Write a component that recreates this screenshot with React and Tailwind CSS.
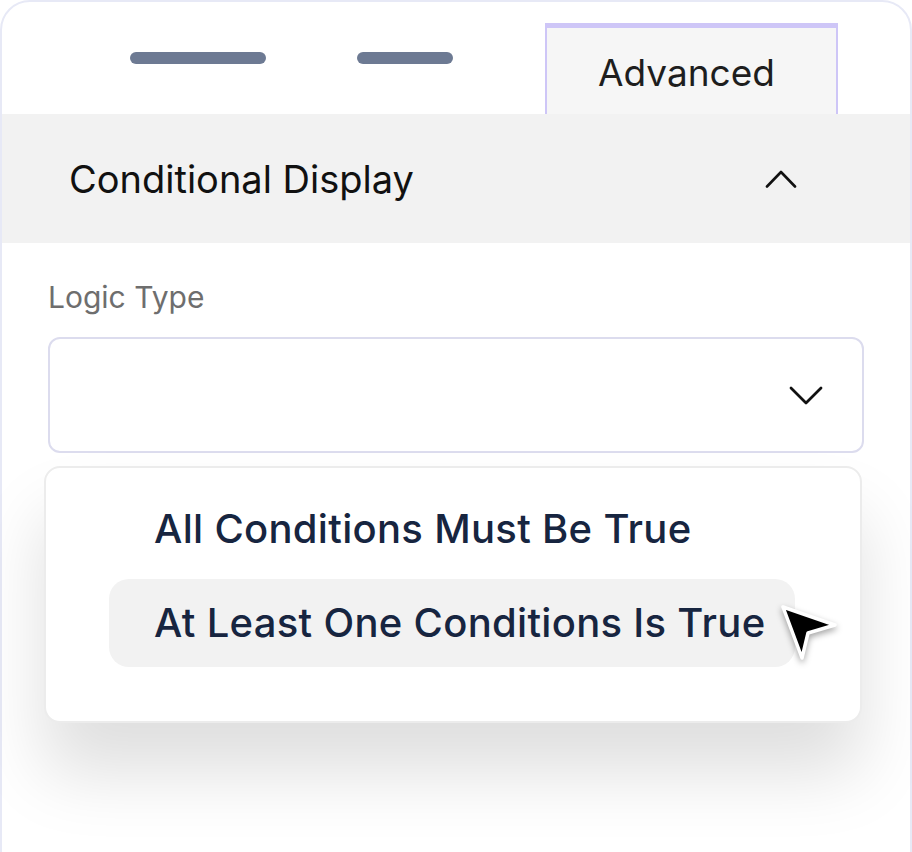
import React from "react";

const options = [
  { label: "All Conditions Must Be True", active: false },
  { label: "At Least One Conditions Is True", active: true },
];

function ChevronUp() {
  return (
    <svg width="32" height="18" viewBox="0 0 32 18" fill="none">
      <path d="M2 16.5 L16 2 L30 16.5" stroke="#111" strokeWidth="2.6" strokeLinecap="round" strokeLinejoin="round" />
    </svg>
  );
}

function ChevronDown() {
  return (
    <svg width="36" height="20" viewBox="0 0 36 20" fill="none">
      <path d="M3 3 L18 18 L33 3" stroke="#111" strokeWidth="2.8" strokeLinecap="round" strokeLinejoin="round" />
    </svg>
  );
}

function Cursor() {
  return (
    <svg width="64" height="64" viewBox="0 0 64 64" className="drop-shadow-[0_3px_3px_rgba(0,0,0,0.35)]">
      <path d="M6 7 L58 25 L31 33 L25 58 Z" fill="#000" stroke="#fff" strokeWidth="3.5" strokeLinejoin="round" />
    </svg>
  );
}

export default function App() {
  return (
    <div className="w-[912px] h-[852px] overflow-hidden bg-white" style={{ fontFamily: "Inter, 'Noto Sans', sans-serif" }}>
      <div className="h-[900px] border-2 border-[#e7e9f6] rounded-t-[30px] bg-white">
        {/* tabs */}
        <div className="flex items-start h-[112px]">
          <div className="ml-[128px] mt-[50px] w-[136px] h-[12px] rounded-full bg-[#6d7a93]" />
          <div className="ml-[91px] mt-[50px] w-[96px] h-[12px] rounded-full bg-[#6d7a93]" />
          <div className="ml-[92px] mt-[21px] w-[293px] h-[91px] border-x-2 border-t-[5px] border-[#cec6f7] bg-[#f6f6f6] text-center pt-[23px] pr-[10px]">
            <span className="text-[37px] leading-[44px] text-[#1e1e1e]">Advanced</span>
          </div>
        </div>

        {/* section header */}
        <div className="h-[129px] bg-[#f2f2f2] flex items-center justify-between pl-[67px] pr-[113px]">
          <span className="text-[38px] leading-[44px] text-[#111]">Conditional Display</span>
          <ChevronUp />
        </div>

        <div className="px-[46px] pt-[36px]">
          <div className="text-[30px] leading-[36px] text-[#6e6e6e]">Logic Type</div>

          <div className="mt-[22px] h-[116px] border-2 border-[#dcdcee] rounded-[12px] flex items-center justify-end pr-[38px]">
            <ChevronDown />
          </div>

          <div className="relative -ml-[4px] mr-[2px] mt-[13px] h-[257px] border-2 border-[#ececec] rounded-[16px] bg-white shadow-[0_50px_70px_rgba(0,0,0,0.13)] pt-[17px] flex flex-col gap-[6px]">
            {options.map((o) => (
              <div
                key={o.label}
                className={
                  "ml-[63px] w-[686px] h-[88px] rounded-[20px] flex items-center pl-[45px] " +
                  (o.active ? "bg-[#f2f2f2]" : "")
                }
              >
                <span className="text-[40px] leading-[48px] font-medium tracking-[0.3px] text-[#172540]">{o.label}</span>
              </div>
            ))}
            <div className="absolute left-[731px] top-[132px]">
              <Cursor />
            </div>
          </div>
        </div>
      </div>
    </div>
  );
}
